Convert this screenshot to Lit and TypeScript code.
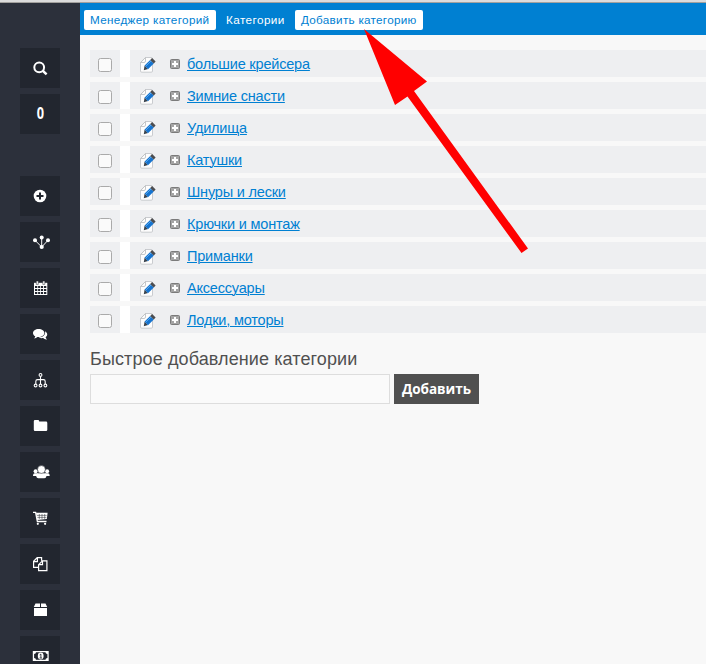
import { LitElement, html, css, svg } from "lit";
import { customElement } from "lit/decorators.js";

const ICONS = {
  search: svg`<circle cx="19.2" cy="19.3" r="4.9" fill="none" stroke="#fff" stroke-width="2"/><path d="M22.6 22.6L26.6 26.4" stroke="#fff" stroke-width="2.5"/>`,
  plus: svg`<circle cx="20" cy="20" r="6.3"/><path d="M20 16.5V23.5M16.5 20H23.5" stroke="#22262f" stroke-width="2"/>`,
  branch: svg`<path d="M15 18.3L21.7 25L28 18.3M21.7 15.5V25" fill="none" stroke="#fff"/><circle cx="15" cy="18.3" r="2"/><circle cx="21.7" cy="15.6" r="2"/><circle cx="28" cy="18.3" r="2"/><circle cx="21.7" cy="25" r="2.1"/>`,
  calendar: svg`<path d="M14 14.8h13.3V27H14z"/><path d="M16.3 13h2v3.4h-2zM22.8 13h2v3.4h-2z" stroke="#22262f" stroke-width=".5"/><path d="M15 18h2.3v2H15zM18.1 18h2.1v2h-2.1zM21 18h2.1v2H21zM24 18h2.3v2H24zM15 21h2.3v2H15zM18.1 21h2.1v2h-2.1zM21 21h2.1v2H21zM24 21h2.3v2H24zM15 24h2.3v2H15zM18.1 24h2.1v2h-2.1zM21 24h2.1v2H21zM24 24h2.3v2H24z" fill="#22262f"/>`,
  comments: svg`<path d="M25 17.3C28 19 27.8 21.8 25.6 23.2C25.8 24.2 26.4 24.9 27 25.5C25.3 25.8 24.1 25 23.2 24.1C21.4 24.4 19.7 24.1 18.6 23.4C22.5 23.4 26 21 25 17.3z"/><path d="M18.6 15C22 15 24.4 16.7 24.4 19S22 23 18.6 23L17.4 22.9C16.5 23.8 15.5 24.3 14.2 24.5C14.8 23.8 15.2 23 15.3 22.3C13.7 21.5 13 20.3 13 19C13 16.7 15.4 15 18.6 15z"/>`,
  sitemap: svg`<g fill="none" stroke="#fff" stroke-width="1.1"><circle cx="20.5" cy="14.9" r="1.4"/><path d="M20.5 16.3V24M15.8 24V21.5Q15.8 19.6 17.5 19.6H23.5Q25.2 19.6 25.2 21.5V24"/><circle cx="15.6" cy="25.5" r="1.4"/><circle cx="20.5" cy="25.5" r="1.4"/><circle cx="25.4" cy="25.5" r="1.4"/></g>`,
  folder: svg`<path d="M13.8 15.2Q13.8 14 15 14H18Q19.2 14 19.2 15.2V15.6H26Q27.3 15.6 27.3 16.9V23.7Q27.3 25 26 25H15Q13.8 25 13.8 23.7z"/>`,
  users: svg`<circle cx="15.6" cy="19.2" r="2"/><circle cx="27.1" cy="19.2" r="2"/><path d="M13 23.8Q13 21.3 14.5 21.3H18V24H13zM29.7 23.8Q29.7 21.3 28.2 21.3H24.7V24H29.7z"/><path d="M16.4 24.2Q16.5 21.2 18.7 21.2H24Q26.2 21.2 26.3 24.2Q26.3 26.2 24.3 26.2H18.4Q16.4 26.2 16.4 24.2z"/><circle cx="21.4" cy="17.5" r="3.9" stroke="#22262f" stroke-width=".5"/>`,
  cart: svg`<path d="M13 14.3H15.6L17.4 23.5H26.5" fill="none" stroke="#fff" stroke-width="1.3"/><path d="M16 14.8H27.6L26.8 21L17.2 22z"/><path d="M17 17.4H26.7M17.4 19.4H26.4M19.3 16V21M22 16V21M24.7 16V21" stroke="#22262f" stroke-width=".5"/><circle cx="17.8" cy="25.8" r="1.1"/><circle cx="25.1" cy="25.8" r="1.1"/>`,
  copy: svg`<path d="M18.5 23.3H13.6V17.3L17.2 13.7H21.6V16.8M13.6 17.6H17.4V13.7M22.5 16.8H26.9V26.6H18.6V20.7zM18.6 20.7H22.5V16.8" fill="none" stroke="#fff" stroke-width="1.2"/>`,
  box: svg`<path d="M15.5 13.5H20V17H13.8zM21 13.5H25.5L27.2 17H21zM14 18H27V26H14z"/>`,
  money: svg`<path d="M12.8 15H28.7V25H12.8z"/><path d="M16 16.2H25.5Q25.5 18 27.4 18V22Q25.5 22 25.5 23.8H16Q16 22 14.1 22V18Q16 18 16 16.2z" fill="#22262f"/><ellipse cx="20.7" cy="20" rx="2.9" ry="3.4"/><path d="M19.7 18.9L20.9 18.1V21.8M19.6 22H22" fill="none" stroke="#22262f" stroke-width=".9"/>`,
};

@customElement("side-bar")
class SideBar extends LitElement {
  static styles = css`
    :host { display: flex; flex-direction: column; gap: 6px; width: 80px; padding: 45px 20px 0; box-sizing: border-box; background: #2c303b; overflow: hidden; }
    .tile { width: 40px; height: 40px; flex: none; background: #22262f; color: #fff; display: flex; align-items: center; justify-content: center; }
    .count { margin-bottom: 36px; font: 700 15px/38px "Noto Sans", sans-serif; }
    .count span { transform: scale(.85, 1.05); padding-bottom: 2px; }
    svg { width: 40px; height: 40px; fill: #fff; }
  `;
  tile(icon: unknown) {
    return html`<div class="tile"><svg viewBox="0 0 40 40">${icon}</svg></div>`;
  }
  render() {
    const { search, ...rest } = ICONS;
    return html`${this.tile(search)}
      <div class="tile count"><span>0</span></div>
      ${Object.values(rest).map((i) => this.tile(i))}`;
  }
}

@customElement("category-row")
class CategoryRow extends LitElement {
  static properties = { name: {} };
  declare name: string;
  static styles = css`
    :host { display: flex; height: 27px; background: #eeeff1; }
    .check { width: 30px; display: flex; padding: 8px 0 0 8px; box-sizing: border-box; }
    .box { width: 14px; height: 14px; box-sizing: border-box; border: 1px solid #aaa; border-radius: 2.5px; background: #fafafa; }
    .gap { width: 10px; background: #fff; }
    .main { display: flex; flex: 1; padding-left: 10px; }
    .edit { width: 16px; height: 17px; margin-top: 6px; }
    .expand { width: 10px; height: 10px; margin: 9px 7px 0 14px; }
    a { font: 14.5px/28px "Liberation Sans", Arial, sans-serif; letter-spacing: -.19px; color: #0080d2; text-decoration: underline; text-underline-offset: 1px; text-decoration-thickness: 1px; white-space: nowrap; }
  `;
  render() {
    return html`
      <div class="check"><span class="box"></span></div>
      <div class="gap"></div>
      <div class="main">
        <svg class="edit" viewBox="0 0 16 17">
          <path d="M5.5 1.5H11Q12.5 1.5 12.5 3V15Q12.5 16.2 11.3 16.2H1.7Q.5 16.2 .5 15V6.5z" fill="#fdfdfd" stroke="#c4c6c9" stroke-width=".9"/>
          <path d="M.7 6.5L5.5 1.5V5Q5.5 6.5 4 6.5z" fill="#fff" stroke="#b8babd" stroke-width=".8"/>
          <path d="M3.8 14.2L4.6 9.6L8 13z" fill="#39434d"/>
          <path d="M4.6 9.6L10.2 3.9L13.8 7.4L8 13.2z" fill="#1674cf"/>
          <path d="M6 9.9L11.2 4.9" stroke="#58a8ee" stroke-width="1"/>
          <path d="M10.2 3.9L12.1 2.1L15.6 5.6L13.8 7.4z" fill="#4c4d50"/>
        </svg>
        <svg class="expand" viewBox="0 0 10 10">
          <rect x=".5" y=".5" width="9" height="9" rx="1" fill="#a5a5a5" stroke="#7b7b7b"/>
          <path d="M5 2V8M2 5H8" stroke="#fff" stroke-width="2"/>
        </svg>
        <a>${this.name}</a>
      </div>`;
  }
}

@customElement("app-root")
class AppRoot extends LitElement {
  static styles = css`
    :host { display: flex; flex-direction: column; position: relative; width: 706px; height: 664px; overflow: hidden; background: #f8f8f8; font-family: "Liberation Sans", Arial, sans-serif; }
    .top { height: 3px; box-sizing: border-box; background: #dcdcdc; border-bottom: 1px solid #a3a19e; flex: none; }
    .body { display: flex; flex: 1; min-height: 0; }
    .page { flex: 1; min-width: 0; }
    .nav { display: flex; gap: 4px; height: 32px; padding: 7px 4px 0; box-sizing: border-box; background: #0080d2; }
    .tab { height: 20px; box-sizing: border-box; padding: 0 6px; border-radius: 2px; font-size: 11.7px; letter-spacing: .34px; line-height: 20px; color: #fff; white-space: nowrap; }
    .tab.light { background: #fff; color: #0080d2; }
    .tab.manager { width: 132px; }
    .tab.current { width: 71px; letter-spacing: .44px; }
    .tab.create { width: 128px; letter-spacing: .28px; }
    .list { display: flex; flex-direction: column; gap: 5px; padding: 15px 0 0 10px; }
    .title { margin: 0; padding: 15px 0 0 10px; font-weight: 400; font-size: 18px; letter-spacing: .11px; line-height: 22px; color: #505050; }
    .form { display: flex; gap: 4px; padding: 4px 0 0 10px; }
    .field { width: 300px; height: 30px; box-sizing: border-box; border: 1px solid #ddd; background: #fafafa; padding: 0 6px; outline: none; }
    .add { width: 85px; height: 30px; border: 0; padding: 0; background: #505050; color: #fff; font: 700 13.5px/30px "Open Sans", sans-serif; text-align: center; }
    .arrow { position: absolute; left: 0; top: 0; width: 706px; height: 664px; pointer-events: none; }
  `;
  render() {
    const names = ["большие крейсера", "Зимние снасти", "Удилища", "Катушки", "Шнуры и лески", "Крючки и монтаж", "Приманки", "Аксессуары", "Лодки, моторы"];
    return html`
      <div class="top"></div>
      <div class="body">
        <side-bar></side-bar>
        <div class="page">
          <nav class="nav">
            <a class="tab light manager">Менеджер категорий</a>
            <a class="tab current">Категории</a>
            <a class="tab light create">Добавить категорию</a>
          </nav>
          <div class="list">${names.map((n) => html`<category-row .name=${n}></category-row>`)}</div>
          <h2 class="title">Быстрое добавление категории</h2>
          <div class="form">
            <input class="field" />
            <button class="add">Добавить</button>
          </div>
        </div>
      </div>
      <svg class="arrow" viewBox="0 0 706 664">
        <path d="M364 29L427 81.5L414 91L528 248.5L521.5 253L407.5 96.5L395 105z" fill="#f00"/>
      </svg>`;
  }
}
